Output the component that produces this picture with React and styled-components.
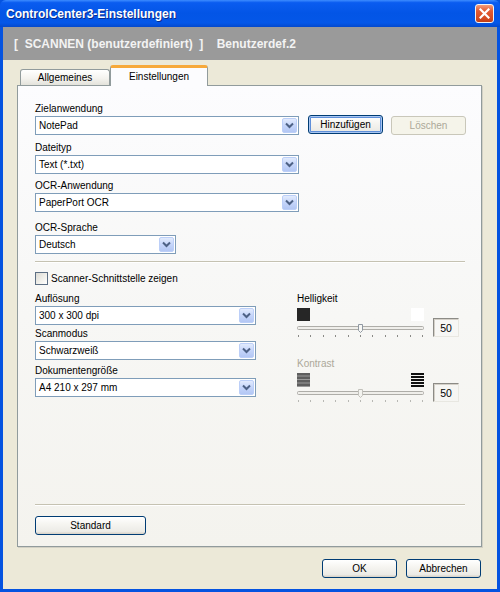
import React from 'react';
import styled, { createGlobalStyle } from 'styled-components';

const GlobalStyle = createGlobalStyle`
  html, body {
    margin: 0;
    padding: 0;
    background: #ffffff;
  }
  body {
    font-family: "Liberation Sans", Arial, sans-serif;
    font-size: 10px;
    color: #000000;
  }
`;

const Frame = styled.div`
  width: 500px;
  height: 592px;
  box-sizing: border-box;
  display: flex;
  flex-direction: column;
  background: #0553e0;
`;

const TitleBar = styled.div`
  height: 27px;
  flex: none;
  display: flex;
  align-items: center;
  justify-content: space-between;
  padding: 0 6px 0 6px;
  background: linear-gradient(180deg, #3d8cff 0%, #0a5cf0 10%, #0355e6 50%, #0457e8 85%, #0449cc 100%);
  border-radius: 6px 6px 0 0;
`;

const Title = styled.span`
  color: #ffffff;
  font-weight: bold;
  font-size: 12px;
  text-shadow: 1px 1px 0 #0b2a8a;
`;

const CloseBox = styled.div`
  width: 19px;
  height: 19px;
  box-sizing: border-box;
  border: 1px solid #f4f4f4;
  border-radius: 3px;
  background: linear-gradient(180deg, #f29c7c 0%, #e25a32 35%, #d44a20 80%, #c23d16 100%);
  display: flex;
  align-items: center;
  justify-content: center;
`;

const Client = styled.div`
  flex: 1;
  margin: 0 3px 3px 3px;
  background: #ece9d8;
  display: flex;
  flex-direction: column;
`;

const HeaderStrip = styled.div`
  height: 33px;
  flex: none;
  background: #9a9a9a;
  color: #f3f3f3;
  font-weight: bold;
  font-size: 12px;
  display: flex;
  align-items: center;
  padding-left: 11px;
  white-space: pre;
`;

const Body = styled.div`
  padding: 5px 15px 0 14px;
  display: flex;
  flex-direction: column;
`;

const TabRow = styled.div`
  display: flex;
  align-items: flex-end;
  height: 20px;
  padding-left: 3px;
`;

const Tab = styled.div`
  box-sizing: border-box;
  width: ${p => (p.$active ? 98 : 90)}px;
  height: ${p => (p.$active ? 21 : 16)}px;
  margin-bottom: ${p => (p.$active ? -1 : 0)}px;
  border: 1px solid #919b9c;
  border-bottom: none;
  border-top: ${p => (p.$active ? '3px solid #f7a93a' : '1px solid #919b9c')};
  border-radius: 3px 3px 0 0;
  background: ${p =>
    p.$active ? '#fcfcfe' : 'linear-gradient(180deg, #ffffff 0%, #f4f3ef 55%, #e3e2db 100%)'};
  display: flex;
  align-items: center;
  justify-content: center;
  padding-bottom: ${p => (p.$active ? 2 : 0)}px;
  position: relative;
  z-index: ${p => (p.$active ? 2 : 1)};
`;

const Panel = styled.div`
  box-sizing: border-box;
  height: 462px;
  border: 1px solid #919b9c;
  background: linear-gradient(180deg, #fcfcfe 0%, #f7f7f5 50%, #f4f3ee 100%);
  box-shadow: 1px 1px 0 #d2d0c4;
  padding: 16px 16px 11px 17px;
  display: flex;
  flex-direction: column;
  position: relative;
  z-index: 1;
`;

const FieldLabel = styled.div`
  line-height: 14px;
  height: 14px;
  margin-top: ${p => p.$mt || 0}px;
  color: ${p => (p.$disabled ? '#aca899' : '#000000')};
  white-space: nowrap;
`;

const ComboBox = styled.div`
  box-sizing: border-box;
  width: ${p => p.$w}px;
  height: 19px;
  border: 1px solid #7f9db9;
  background: #ffffff;
  display: flex;
  align-items: center;
  justify-content: space-between;
  padding: 1px 1px 1px 3px;
  flex: none;
`;

const ComboText = styled.span`
  white-space: nowrap;
`;

const ComboArrow = styled.div`
  box-sizing: border-box;
  width: 15px;
  height: 15px;
  border: 1px solid #bccff8;
  border-radius: 2px;
  background: linear-gradient(180deg, #e2ebfd 0%, #c5d5fa 50%, #b3c7f4 100%);
  display: flex;
  align-items: center;
  justify-content: center;
`;

const ComboRow = styled.div`
  display: flex;
  align-items: flex-start;
`;

const XpButton = styled.div`
  box-sizing: border-box;
  width: ${p => p.$w || 75}px;
  height: 19px;
  margin-left: ${p => p.$ml || 0}px;
  margin-top: ${p => p.$mtop || 0}px;
  border: 1px solid ${p => (p.$disabled ? '#c9c7ba' : '#003c74')};
  border-radius: 3px;
  background: ${p =>
    p.$disabled ? '#f5f4ea' : 'linear-gradient(180deg, #ffffff 0%, #f6f5f1 40%, #ecebe6 85%, #d6d0c5 100%)'};
  box-shadow: ${p => (p.$focus ? 'inset 0 0 0 1px #a9c6f2, inset 0 0 0 2px #5f8fd9' : 'none')};
  color: ${p => (p.$disabled ? '#aca899' : '#000000')};
  display: flex;
  align-items: center;
  justify-content: center;
  flex: none;
`;

const EtchedLine = styled.div`
  height: 1px;
  margin-top: ${p => p.$mt || 0}px;
  background: #c5c2b2;
  border-bottom: 1px solid #ffffff;
  flex: none;
`;

const CheckRow = styled.div`
  display: flex;
  align-items: center;
  gap: 3px;
  margin-top: 9px;
  height: 13px;
`;

const CheckBox = styled.div`
  box-sizing: border-box;
  width: 13px;
  height: 13px;
  border: 1px solid #5d6f84;
  background: linear-gradient(135deg, #dcdbd5 0%, #f2f1ec 60%, #ffffff 100%);
`;

const LowerSection = styled.div`
  display: flex;
  margin-top: 7px;
`;

const LeftColumn = styled.div`
  width: 221px;
  display: flex;
  flex-direction: column;
`;

const RightColumn = styled.div`
  margin-left: 41px;
  display: flex;
  flex-direction: column;
`;

const SliderRow = styled.div`
  display: flex;
  align-items: flex-end;
  margin-top: ${p => p.$mt || 0}px;
`;

const SliderBlock = styled.div`
  width: 127px;
  display: flex;
  flex-direction: column;
`;

const IconRow = styled.div`
  display: flex;
  justify-content: space-between;
  height: 14px;
`;

const Swatch = styled.div`
  width: 13px;
  height: 13px;
  background: ${p => p.$color};
`;

const ValueBox = styled.div`
  box-sizing: border-box;
  width: 26px;
  height: 19px;
  margin-left: 9px;
  margin-bottom: 1px;
  border: 1px solid;
  border-color: #8c8b86 #e8e7e1 #e8e7e1 #8c8b86;
  box-shadow: inset 1px 1px 0 #d4d0c8;
  display: flex;
  align-items: center;
  justify-content: center;
  font-size: 10.5px;
`;

const Spacer = styled.div`
  flex: 1;
`;

const Footer = styled.div`
  display: flex;
  justify-content: flex-end;
  gap: 9px;
  margin-top: 12px;
  padding-right: 1px;
`;

const Chevron = () => (
  <svg width="9" height="7" viewBox="0 0 9 7">
    <path d="M1 1.5 L4.5 5 L8 1.5" fill="none" stroke="#4d6185" strokeWidth="2" />
  </svg>
);

const Combo = ({ w, value }) => (
  <ComboBox $w={w}>
    <ComboText>{value}</ComboText>
    <ComboArrow>
      <Chevron />
    </ComboArrow>
  </ComboBox>
);

const SliderTrack = ({ disabled }) => {
  const ticks = [];
  for (let i = 0; i <= 10; i++) ticks.push(Math.round(1 + i * 12.4));
  const tickColor = disabled ? '#b8b8b4' : '#8a8a86';
  return (
    <svg width="127" height="16" viewBox="0 0 127 16">
      <rect x="0.5" y="4.5" width="126" height="3" rx="1" fill="#efeeea" stroke="#aeada8" />
      <path
        d="M61.5 2.5 H65.5 V8.5 L63.5 10.5 L61.5 8.5 Z"
        fill={disabled ? '#f3f3ef' : '#f7f7f4'}
        stroke={disabled ? '#c2c1bb' : '#8f98a2'}
      />
      {ticks.map(x => (
        <rect key={x} x={x} y="13" width="1" height="2" fill={tickColor} />
      ))}
    </svg>
  );
};

const LowContrastIcon = () => (
  <svg width="13" height="14" viewBox="0 0 13 14">
    <rect x="0" y="0" width="13" height="14" fill="#9a9a9a" />
    {[0, 3.5, 7, 10.5].map(y => (
      <rect key={y} x="0" y={y} width="13" height="2.5" fill="#5e5e5e" />
    ))}
  </svg>
);

const HighContrastIcon = () => (
  <svg width="13" height="14" viewBox="0 0 13 14">
    {[0, 3, 6, 9, 12].map(y => (
      <rect key={y} x="0" y={y} width="13" height="2" fill="#111111" />
    ))}
  </svg>
);

export default function App() {
  return (
    <>
      <GlobalStyle />
      <Frame>
        <TitleBar>
          <Title>ControlCenter3-Einstellungen</Title>
          <CloseBox>
            <svg width="11" height="11" viewBox="0 0 11 11">
              <path d="M1.5 1.5 L9.5 9.5 M9.5 1.5 L1.5 9.5" stroke="#ffffff" strokeWidth="2.2" strokeLinecap="square" />
            </svg>
          </CloseBox>
        </TitleBar>
        <Client>
          <HeaderStrip>{'[  SCANNEN (benutzerdefiniert)  ]    Benutzerdef.2'}</HeaderStrip>
          <Body>
            <TabRow>
              <Tab>Allgemeines</Tab>
              <Tab $active>Einstellungen</Tab>
            </TabRow>
            <Panel>
              <FieldLabel>Zielanwendung</FieldLabel>
              <ComboRow>
                <Combo w={264} value="NotePad" />
                <XpButton $ml={9} $mtop={-1} $focus>Hinzufügen</XpButton>
                <XpButton $ml={8} $disabled>Löschen</XpButton>
              </ComboRow>

              <FieldLabel $mt={6}>Dateityp</FieldLabel>
              <Combo w={264} value="Text (*.txt)" />

              <FieldLabel $mt={5}>OCR-Anwendung</FieldLabel>
              <Combo w={264} value="PaperPort OCR" />

              <FieldLabel $mt={9}>OCR-Sprache</FieldLabel>
              <Combo w={141} value="Deutsch" />

              <EtchedLine $mt={7} />

              <CheckRow>
                <CheckBox />
                <span>Scanner-Schnittstelle zeigen</span>
              </CheckRow>

              <LowerSection>
                <LeftColumn>
                  <FieldLabel>Auflösung</FieldLabel>
                  <Combo w={221} value="300 x 300 dpi" />
                  <FieldLabel $mt={2}>Scanmodus</FieldLabel>
                  <Combo w={221} value="Schwarzweiß" />
                  <FieldLabel $mt={4}>Dokumentengröße</FieldLabel>
                  <Combo w={221} value="A4 210 x 297 mm" />
                </LeftColumn>
                <RightColumn>
                  <FieldLabel>Helligkeit</FieldLabel>
                  <SliderRow $mt={2}>
                    <SliderBlock>
                      <IconRow>
                        <Swatch $color="#262626" />
                        <Swatch $color="#ffffff" />
                      </IconRow>
                      <SliderTrack />
                    </SliderBlock>
                    <ValueBox>50</ValueBox>
                  </SliderRow>
                  <FieldLabel $mt={19} $disabled>Kontrast</FieldLabel>
                  <SliderRow $mt={2}>
                    <SliderBlock>
                      <IconRow>
                        <LowContrastIcon />
                        <HighContrastIcon />
                      </IconRow>
                      <SliderTrack disabled />
                    </SliderBlock>
                    <ValueBox>50</ValueBox>
                  </SliderRow>
                </RightColumn>
              </LowerSection>

              <Spacer />
              <EtchedLine />
              <XpButton $w={111} $mtop={10}>Standard</XpButton>
            </Panel>
            <Footer>
              <XpButton>OK</XpButton>
              <XpButton>Abbrechen</XpButton>
            </Footer>
          </Body>
        </Client>
      </Frame>
    </>
  );
}
